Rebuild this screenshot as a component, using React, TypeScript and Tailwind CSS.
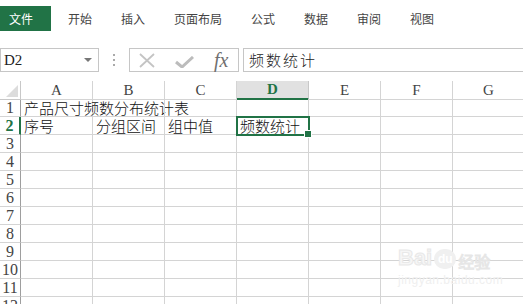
import React from "react";

const tabs = ["开始", "插入", "页面布局", "公式", "数据", "审阅", "视图"];
const cols = ["A", "B", "C", "D", "E", "F", "G"];
const rows = [1, 2, 3, 4, 5, 6, 7, 8, 9, 10, 11, 12];

const cjk = "font-['Noto_Sans_CJK_SC',sans-serif]";
const serif = "font-['Liberation_Serif','DejaVu_Serif',serif]";

const cells: Record<string, string> = {
  "1-A": "产品尺寸频数分布统计表",
  "2-A": "序号",
  "2-B": "分组区间",
  "2-C": "组中值",
  "2-D": "频数统计",
};

function Ribbon() {
  return (
    <div className={`h-[36px] pt-[6px] flex items-start ${cjk}`}>
      <div className="h-[25px] w-[51px] bg-[#217346] text-white text-[12px] flex items-center pl-[9px]">文件</div>
      <div className="h-[25px] flex items-center gap-[29px] ml-[17px] text-[12px] text-[#444]">
        {tabs.map(t => (
          <span key={t}>{t}</span>
        ))}
      </div>
    </div>
  );
}

function FormulaBar() {
  return (
    <div className="mt-[12px] h-[24px] flex items-stretch">
      <div className="w-[99px] border border-[#c6c6c6] flex items-center justify-between pl-[3px] pr-[6px]">
        <span className={`${serif} text-[15px] text-[#222]`}>D2</span>
        <svg width="8" height="5" viewBox="0 0 8 5">
          <path d="M0 0 L8 0 L4 4 Z" fill="#777" />
        </svg>
      </div>
      <div className="w-[30px] flex flex-col items-center justify-center gap-[3px]">
        <span className="w-[2px] h-[2px] bg-[#aaa]" />
        <span className="w-[2px] h-[2px] bg-[#aaa]" />
        <span className="w-[2px] h-[2px] bg-[#aaa]" />
      </div>
      <div className="w-[110px] border border-[#c6c6c6] flex items-center pl-[9px] gap-[20px]">
        <svg width="16" height="15" viewBox="0 0 16 15">
          <path d="M1 1 L15 14 M15 1 L1 14" stroke="#c4c4c4" strokeWidth="1.8" fill="none" />
        </svg>
        <svg width="19" height="12" viewBox="0 0 19 12" className="mt-[3px]">
          <path d="M1 6 L7 11 L18 1" stroke="#bcbcbc" strokeWidth="3" fill="none" />
        </svg>
        <span className="font-['Liberation_Serif',serif] italic text-[20px] text-[#707070] leading-none">fx</span>
      </div>
      <div className={`ml-[4px] flex-1 border border-r-0 border-[#c6c6c6] flex items-center pl-[5px] ${cjk} font-light text-[15px] tracking-[2px] text-[#222]`}>
        频数统计
      </div>
    </div>
  );
}

function Grid() {
  return (
    <div className="mt-[9px] relative grid grid-cols-[21px_repeat(7,72px)] auto-rows-[18px] text-[#444]">
      <div className="h-[19px] border-r border-b border-[#c8c8c8] relative">
        <svg width="14" height="14" viewBox="0 0 14 14" className="absolute left-[5px] top-[3px]">
          <path d="M13 1 L13 13 L1 13 Z" fill="#dcdcdc" />
        </svg>
      </div>
      {cols.map(c => (
        <div
          key={c}
          className={`h-[19px] flex items-center justify-center ${serif} text-[15px] ${
            c === "D"
              ? "bg-[#e1e1e1] text-[#217346] font-bold border-b-2 border-b-[#217346] border-r border-r-[#c8c8c8]"
              : "border-r border-b border-[#d4d4d4]"
          }`}
        >
          {c}
        </div>
      ))}
      {rows.map(r => (
        <React.Fragment key={r}>
          <div
            className={`flex items-center justify-center ${serif} text-[16px] leading-[18px] border-b border-[#d4d4d4] ${
              r === 2 ? "text-[#217346] font-bold border-r-2 border-r-[#217346]" : "border-r border-r-[#9e9e9e]"
            }`}
          >
            {r}
          </div>
          {cols.map(c => (
            <div
              key={c}
              className={`relative border-r border-b border-[#d4d4d4] ${
                r === 2 && c === "D" ? "outline-2 outline-[#217346] -outline-offset-1 z-10" : ""
              }`}
            >
              {cells[`${r}-${c}`] && (
                <span className={`absolute left-[3px] top-0 whitespace-nowrap ${cjk} font-light text-[15px] text-[#111] leading-[17px]`}>
                  {cells[`${r}-${c}`]}
                </span>
              )}
              {r === 2 && c === "D" && (
                <span className="absolute right-[-4px] bottom-[-4px] w-[6px] h-[6px] bg-[#217346] border border-white box-content" />
              )}
            </div>
          ))}
        </React.Fragment>
      ))}
      <div className="absolute left-[398px] top-[166px] flex flex-col items-start pointer-events-none">
        <div className="flex items-end gap-[2px]">
          <span className="font-['Liberation_Sans',sans-serif] font-bold text-[22px] leading-none text-[#f6f6f6] [-webkit-text-stroke:1px_#e8e8e8]">Bai</span>
          <span className="rounded-full w-[22px] h-[20px] bg-[#f0f0f0] text-white text-[12px] font-bold leading-[20px] text-center font-['Liberation_Sans',sans-serif]">du</span>
          <span className={`${cjk} text-[16px] leading-none text-[#f4f4f4] [-webkit-text-stroke:1px_#e6e6e6]`}>经验</span>
        </div>
        <span className="font-['Liberation_Sans',sans-serif] text-[12px] text-[#efefef] mt-[2px] tracking-[0.5px]">jingyan.baidu.com</span>
      </div>
    </div>
  );
}

export default function App() {
  return (
    <div className="w-[523px] h-[304px] overflow-hidden bg-white">
      <Ribbon />
      <FormulaBar />
      <Grid />
    </div>
  );
}
